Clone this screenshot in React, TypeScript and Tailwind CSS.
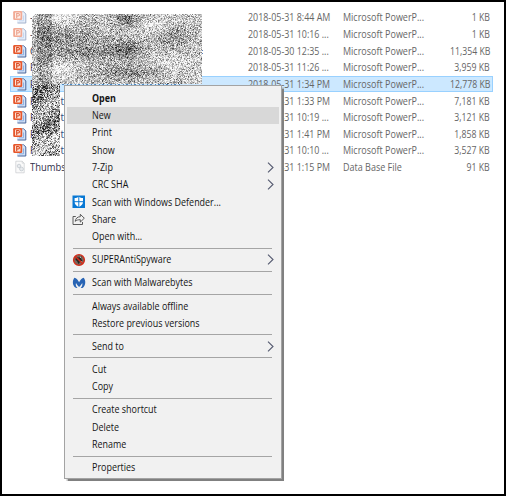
import React from "react";

type FileRow = { lead: string; tail?: string; date: string; type: string; size: string; faded?: boolean; selected?: boolean; kind?: "db" };

const PP = "Microsoft PowerP...";
const files: FileRow[] = [
  { lead: "-", date: "2018-05-31 8:44 AM", type: PP, size: "1 KB", faded: true },
  { lead: "-", date: "2018-05-31 10:16 ...", type: PP, size: "1 KB", faded: true },
  { lead: "C", date: "2018-05-30 12:35 ...", type: PP, size: "11,354 KB" },
  { lead: "P", date: "2018-05-31 11:26 ...", type: PP, size: "3,959 KB" },
  { lead: "P", date: "2018-05-31 1:34 PM", type: PP, size: "12,778 KB", selected: true },
  { lead: "P", tail: "t", date: "2018-05-31 1:33 PM", type: PP, size: "7,181 KB" },
  { lead: "P", tail: "t", date: "2018-05-31 10:19 ...", type: PP, size: "3,121 KB" },
  { lead: "P", tail: "t", date: "2018-05-31 1:41 PM", type: PP, size: "1,858 KB" },
  { lead: "P", tail: "t-", date: "2018-05-31 10:10 ...", type: PP, size: "3,527 KB" },
  { lead: "Thumbs", date: "2018-05-31 1:15 PM", type: "Data Base File", size: "91 KB", kind: "db" },
];

function PptIcon({ faded }: { faded?: boolean }) {
  return (
    <svg width="14" height="14" viewBox="0 0 14 14" className={faded ? "opacity-50" : ""}>
      <path d="M4 1.500h6.300l2.500 2.500v9H4z" fill="#d3e2f6" />
      <path d="M9.500 1.500h.8L12.800 4v9H4.500" fill="none" stroke="#48669c" strokeWidth="1" />
      <path d="M10.500 5.500v5.300H6" fill="none" stroke="#8fb3e4" strokeWidth="1" />
      <rect x=".2" y="1" width="9" height="9" rx="1.200" fill="#e6572c" />
      <rect x="2" y="2.500" width="5.500" height="6" rx=".5" fill="#fde0d4" />
      <path d="M3.700 8.300V3.500h1.500a1.200 1.200 0 0 1 0 2.500H3.700" fill="none" stroke="#d9481f" strokeWidth="1.100" />
    </svg>
  );
}

function DbIcon() {
  return (
    <svg width="14" height="14" viewBox="0 0 14 14">
      <path d="M2.800 1.200h6.400l2 2v9.600H2.800z" fill="#fafafa" stroke="#c9cccf" strokeWidth=".7" />
      <path d="M9.200 1.200v2h2" fill="none" stroke="#c9cccf" strokeWidth=".6" />
      <circle cx="6" cy="6" r="1.800" fill="#e8ebee" stroke="#c3c9cf" strokeWidth=".8" />
      <circle cx="8.500" cy="9" r="1.900" fill="#e8ebee" stroke="#c3c9cf" strokeWidth=".8" />
    </svg>
  );
}

// Seeded scatter of grey pixels that hides the file names.
const shades = ["#202020", "#505050", "#808080", "#a8a8a8", "#cccccc", "#e6e6e6"];
function makeGrain() {
  const out = shades.map(() => "");
  let s = 48271;
  const rnd = () => {
    s = (s * 16807) % 2147483647;
    return s / 2147483647;
  };
  const blob = (x: number, y: number, cx: number, cy: number, rx: number, ry: number) =>
    Math.exp(-(((x - cx) / rx) ** 2) - ((y - cy) / ry) ** 2);
  for (let y = 0; y < 142; y++) {
    for (let x = 0; x < 170; x++) {
      if (y >= 70 && x >= 28) continue;
      if (x + y < 3) continue;
      let d = 0.25;
      if (x < 20) d += 0.16;
      if (x < 5) d -= 0.15;
      d += 0.24 * blob(x, y, 62, 37, 45, 9);
      d += 0.3 * blob(x, y, 94, 5, 12, 6);
      d += 0.18 * blob(x, y, 35, 22, 28, 10);
      d += 0.2 * blob(x, y, 95, 34, 14, 10);
      d += 0.24 * blob(x, y, 92, 58, 32, 7);
      d += 0.18 * blob(x, y, 140, 22, 20, 9);
      d -= 0.2 * blob(x, y, 30, 3, 14, 7);
      d -= 0.2 * blob(x, y, 28, 55, 14, 8);
      d -= 0.16 * blob(x, y, 122, 12, 15, 8);
      d -= 0.12 * blob(x, y, 143, 48, 25, 7);
      if (y >= 70) {
        d = 0.4 + 0.14 * Math.sin(y / 6 + x / 8);
        if (y > 120) d -= 0.08;
      }
      const v = 1 - d + (rnd() + rnd() - 1) * (y >= 70 ? 0.65 : 0.44);
      const i = v < 0.18 ? 0 : v < 0.38 ? 1 : v < 0.55 ? 2 : v < 0.7 ? 3 : v < 0.83 ? 4 : v < 0.94 ? 5 : -1;
      if (i >= 0) out[i] += `M${x} ${y}h1v1h-1z`;
    }
  }
  return out;
}
const grain = makeGrain();

function Grain() {
  return (
    <svg className="absolute left-[32px] top-[14px]" width="172" height="142" shapeRendering="crispEdges">
      <path d="M2 0H170V70H28V142H0V2z" fill="#fafafa" />
      {grain.map((d, i) => (
        <path key={i} d={d} fill={shades[i]} />
      ))}
      <path d="M30 70.500H149" stroke="#4c86bf" strokeWidth="1" strokeDasharray="2 3 1 2" />
      <path d="M170.500 36v1M170.500 39v1" stroke="#5d7fb5" strokeWidth="1" />
    </svg>
  );
}

type Entry = { label: string; icon?: React.ReactNode; sub?: boolean; bold?: boolean; active?: boolean };

const defender = (
  <svg width="14" height="14" viewBox="0 0 14 14">
    <rect x=".5" y=".5" width="12.500" height="12.500" fill="#0878d4" />
    <path d="M6.800 1.800c1.200.9 2.600 1.300 4.200 1.300v3.600c0 2.300-1.500 4.100-4.200 5.200C4.100 10.800 2.600 9 2.600 6.700V3.100c1.600 0 3-.4 4.200-1.300z" fill="#fff" />
    <path d="M6.800 1.500v11M2 6.700h9.500" stroke="#0878d4" strokeWidth="1" />
  </svg>
);
const share = (
  <svg width="14" height="14" viewBox="0 0 14 14" fill="none" stroke="#4b4b4b" strokeWidth=".9">
    <path d="M3.800 3.500H1v8h9.500V9" />
    <path d="M3.200 8.300c.5-3 2.100-4.500 5.100-4.600V1.300l4 3.900-4 3.900V6.700c-2.300 0-3.900.4-5.100 1.600z" />
  </svg>
);
const spyware = (
  <svg width="14" height="14" viewBox="0 0 14 14">
    <circle cx="7" cy="7" r="5.300" fill="#77675c" />
    <path d="M4 4l3 .5 3-1-.5 3 1.500 2-3 .5-1.500 2-1.500-3L3.500 7z" fill="#292421" />
    <path d="M8 4l1.500 1M9 8.500l1.500.5" stroke="#ddd2bf" />
    <circle cx="7" cy="7" r="5.400" fill="none" stroke="#d32b18" strokeWidth="1.400" />
    <path d="M3.200 3.200l7.600 7.600" stroke="#d32b18" strokeWidth="1.600" />
  </svg>
);
const malware = (
  <svg width="14" height="14" viewBox="0 0 14 14">
    <path d="M2.300 1.700C.4 4.600.3 8.600 2.900 11.300c1 .9 2.100.9 2.600.6C3.800 10.500 3.500 8.900 4 7.100c.8 1.600 1.700 2.700 3.100 3.900 1.400-1.200 2.400-2.300 3.100-3.900.5 1.800.1 3.400-1.500 4.800.7.3 1.800.2 2.700-.7 2.500-2.700 2.400-6.600.4-9.500C9.800 2.200 8.200 3.800 7.100 6.300 6 3.800 4.500 2.200 2.300 1.700z" fill="#2864b4" />
  </svg>
);

const groups: Entry[][] = [
  [
    { label: "Open", bold: true },
    { label: "New", active: true },
    { label: "Print" },
    { label: "Show" },
    { label: "7-Zip", sub: true },
    { label: "CRC SHA", sub: true },
    { label: "Scan with Windows Defender...", icon: defender },
    { label: "Share", icon: share },
    { label: "Open with..." },
  ],
  [{ label: "SUPERAntiSpyware", icon: spyware, sub: true }],
  [{ label: "Scan with Malwarebytes", icon: malware }],
  [{ label: "Always available offline" }, { label: "Restore previous versions" }],
  [{ label: "Send to", sub: true }],
  [{ label: "Cut" }, { label: "Copy" }],
  [{ label: "Create shortcut" }, { label: "Delete" }, { label: "Rename" }],
  [{ label: "Properties" }],
];

function ContextMenu() {
  return (
    <div className="absolute left-[64px] top-[85px] h-[394px] w-[218px] border border-[#a3a3a3] bg-[#f1f1f1] px-[2px] pt-[3.500px] text-[10px] text-[#141414] shadow-[1.500px_1.500px_1px_#808080]">
      {groups.map((g, gi) => (
        <React.Fragment key={gi}>
          {gi > 0 && (
            <div className="flex h-[5.700px] items-center pl-[6px] pr-[7px]">
              <div className="h-px w-full bg-[#a5a5a5]" />
            </div>
          )}
          {g.map((e) => (
            <div key={e.label} className={`flex h-[17.350px] items-center ${e.active ? "bg-[#d8d8d8]" : ""} ${e.bold ? "font-bold" : ""}`}>
              <span className="ml-[5px] w-[19.500px] shrink-0">{e.icon}</span>
              <span className="flex-1 origin-left scale-x-[0.895] whitespace-nowrap">{e.label}</span>
              {e.sub && (
                <svg width="7" height="11" viewBox="0 0 7 11" className="mr-[5.500px]">
                  <path d="M1 .7l5 4.800-5 4.800" fill="none" stroke="#555a70" strokeWidth="1.100" />
                </svg>
              )}
            </div>
          ))}
        </React.Fragment>
      ))}
    </div>
  );
}

export default function App() {
  return (
    <div className="relative h-[496px] w-[506px] overflow-hidden border-2 border-black bg-white font-['Open_Sans','Noto_Sans',sans-serif]">
      <div className="flex flex-col pl-[8px] pt-[7px] text-[10px] text-[#666666]">
        {files.map((f, i) => (
          <div
            key={i}
            className={`flex h-[16.650px] w-[483px] items-center whitespace-nowrap ${f.selected ? "bg-[#cce8ff] outline-1 -outline-offset-1 outline-[#99d1ff]" : ""}`}
          >
            <span className="ml-[3px] w-[16.500px] shrink-0">{f.kind === "db" ? <DbIcon /> : <PptIcon faded={f.faded} />}</span>
            <span className="w-[31px] shrink-0 origin-left scale-x-[0.94] pt-px text-[#30304a]">{f.lead}</span>
            <span className="w-[187.500px] shrink-0 pt-px text-[#305080]">{f.tail}</span>
            <span className="w-[95px] shrink-0 origin-left scale-x-[0.89] pt-px">{f.date}</span>
            <span className="flex-1 origin-left scale-x-[0.9] pt-px">{f.type}</span>
            <span className="mr-[3px] origin-right scale-x-[0.87] pt-px">{f.size}</span>
          </div>
        ))}
      </div>
      <div className="absolute -left-[2px] -top-[2px]">
        <Grain />
        <ContextMenu />
      </div>
    </div>
  );
}
